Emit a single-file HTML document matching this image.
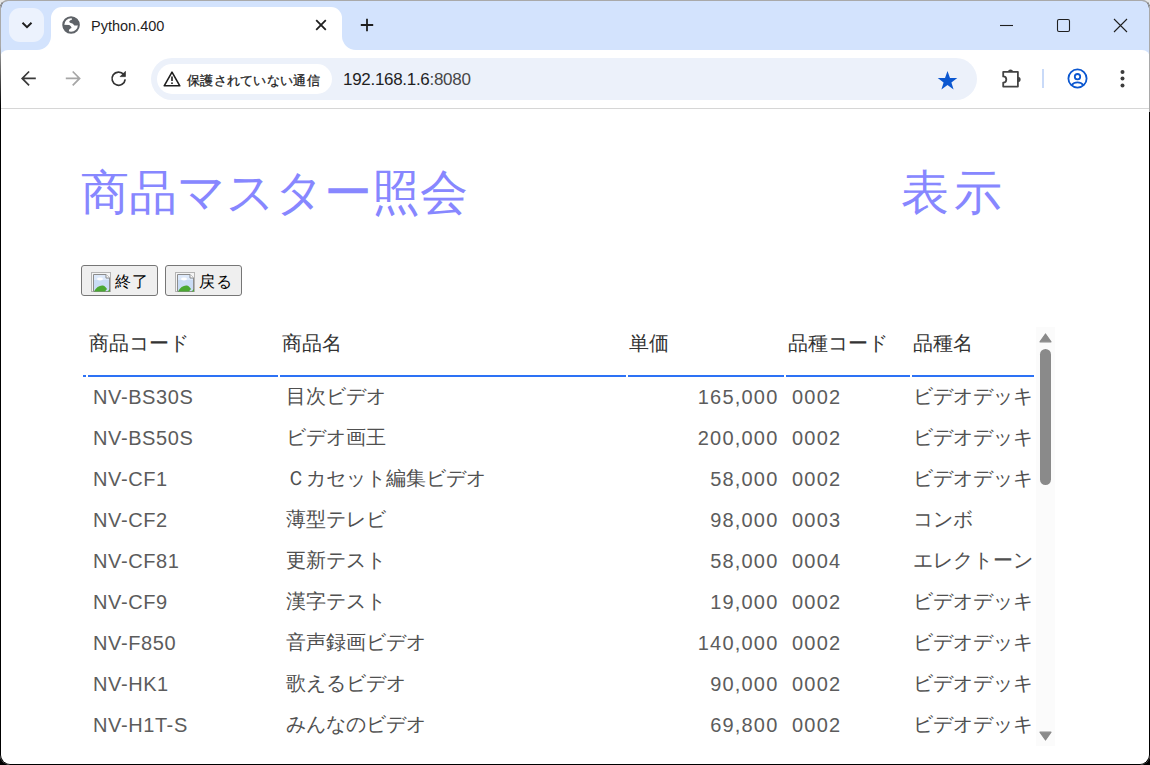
<!DOCTYPE html>
<html lang="ja"><head><meta charset="utf-8">
<style>
*{margin:0;padding:0;box-sizing:border-box}
html,body{width:1150px;height:765px;overflow:hidden;font-family:"Liberation Sans",sans-serif}
body{background:linear-gradient(#e6e6e6 0,#e6e6e6 40px,#3a3550 70px,#000 100px)}
#win{position:absolute;left:0;top:0;width:1150px;height:765px;border-radius:8px 8px 10px 10px;overflow:hidden;background:#fff}
#frame{position:absolute;left:0;top:0;width:1150px;height:765px;border-radius:8px 8px 10px 10px;border:1px solid #000;border-top-color:#a9a9a9;pointer-events:none;z-index:10}
#edgeL{position:absolute;left:0;top:6px;width:1px;height:100px;background:linear-gradient(#a9a9a9,#a9a9a9 40%,#555 70%,#000);z-index:11}
#edgeR{position:absolute;left:1149px;top:6px;width:1px;height:106px;background:#a9a9a9;z-index:11}
#frameT{position:absolute;left:0;top:0;width:1150px;height:100px;border-radius:8px 8px 0 0;border:1px solid #a9a9a9;border-bottom:none;z-index:11}
#strip{position:absolute;left:0;top:0;width:1150px;height:60px;background:#d3e3fd}
#tabbtn{position:absolute;left:9px;top:8px;width:35px;height:34px;border-radius:11px;background:#ecf2fd}
#tab{position:absolute;left:51px;top:7px;width:291px;height:44px;background:#fff;border-radius:11px 11px 0 0}
.tc{position:absolute;top:36px;width:14px;height:14px;background:#fff;overflow:hidden}
.tc::after{content:"";position:absolute;top:-14px;width:28px;height:28px;border-radius:50%;background:#d3e3fd}
#tcl{left:37px}#tcl::after{left:-14px}
#tcr{left:342px}#tcr::after{left:0}
#tabtitle{position:absolute;left:91px;top:18px;font-size:14.5px;color:#1f1f1f;white-space:nowrap}
#toolbar{position:absolute;left:0;top:50px;width:1150px;height:59px;background:#fff;border-radius:8px 8px 0 0;border-bottom:1px solid #d6d6d6}
#omni{position:absolute;left:151px;top:58px;width:826px;height:42px;border-radius:21px;background:#ecf1fa}
#chip{position:absolute;left:157px;top:64px;width:175px;height:30px;border-radius:15px;background:#fff}
#chiptext{position:absolute;left:187px;top:72px;font-size:13px;color:#1f1f1f;white-space:nowrap;-webkit-text-stroke:0.3px #1f1f1f;letter-spacing:0.3px}
#url{position:absolute;left:343px;top:70px;font-size:17px;color:#1f1f1f;white-space:nowrap;letter-spacing:-0.3px}
#url span{color:#474747}
svg{position:absolute;overflow:visible}
.title{position:absolute;top:165px;font-size:47.5px;color:#8787ff;white-space:nowrap;line-height:56px}
.btn{position:absolute;top:265px;height:31px;width:77px;border:1px solid #767676;border-radius:3px;background:#efefef;font-size:16px;color:#000}
.btn .img{position:absolute;left:9px;top:6px}
.btn .lbl{position:absolute;left:33px;top:6px;white-space:nowrap;letter-spacing:0.5px}
.th{position:absolute;top:330px;font-size:20px;color:#333;white-space:nowrap}
.ul{position:absolute;top:375px;height:2px;background:#2d72f5}
.td{position:absolute;font-size:20px;color:#505050;white-space:nowrap;line-height:23px}
.lat{letter-spacing:0.6px;color:#5c5c5c}
.num{letter-spacing:1.2px;color:#5c5c5c}
#sb{position:absolute;left:1036px;top:327px;width:19px;height:419px;background:#fbfbfb}
#thumb{position:absolute;left:1040px;top:349px;width:11px;height:136px;border-radius:5.5px;background:#8a8a8a}
</style></head><body>
<div id="win">
<div id="strip"></div>

<div id="tab"></div>
<div class="tc" id="tcl"></div>
<div class="tc" id="tcr"></div>
<div id="tabbtn"></div>
<svg style="left:21px;top:19px" width="12" height="12" viewBox="0 0 12 12"><path d="M1.5 3.8L6 8.2L10.5 3.8" fill="none" stroke="#1f1f1f" stroke-width="2"/></svg>
<svg style="left:61px;top:15px" width="20" height="20" viewBox="0 0 20 20"><circle cx="10.05" cy="9.95" r="7.8" fill="none" stroke="#5f6368" stroke-width="2"/><g style="clip-path:circle(8px at 10.05px 9.95px)" fill="#5f6368"><path d="M10.9 0L10.9 4.7C9.5 5 8.4 5.5 8.3 6.6C8.2 7.6 9.5 8 10.6 8.3C11.8 8.7 12.4 9.5 13 10.2C13.8 10.9 15.2 10.8 20 9.4L20 0Z"/><path d="M0 9.8L8.2 10.1C9.2 10.5 10 11.5 10.6 13C9.8 13.5 8.8 13.6 8.3 14.4C7.8 15.2 7.9 16 7.9 20L0 20Z"/></g></svg>
<div id="tabtitle">Python.400</div>
<svg style="left:315px;top:19px" width="12" height="12" viewBox="0 0 12 12"><path d="M1.2 1.2L10.8 10.8M10.8 1.2L1.2 10.8" stroke="#1f1f1f" stroke-width="1.8"/></svg>
<svg style="left:360px;top:18px" width="14" height="14" viewBox="0 0 14 14"><path d="M7 0.8V13.2M0.8 7H13.2" stroke="#1f1f1f" stroke-width="1.8"/></svg>
<svg style="left:1000px;top:19px" width="14" height="14" viewBox="0 0 14 14"><path d="M0 6.5H13" stroke="#1f1f1f" stroke-width="1.1"/></svg>
<svg style="left:1056px;top:18px" width="15" height="15" viewBox="0 0 15 15"><rect x="1.5" y="1.5" width="12" height="12" rx="1.5" fill="none" stroke="#1f1f1f" stroke-width="1.1"/></svg>
<svg style="left:1113px;top:18px" width="15" height="15" viewBox="0 0 15 15"><path d="M1 1L14 14M14 1L1 14" stroke="#1f1f1f" stroke-width="1.1"/></svg>

<div id="toolbar"></div>
<svg style="left:20px;top:70px" width="18" height="18" viewBox="0 0 18 18"><path d="M15.8 8.4H2M9.1 1.5L2.2 8.4L9.1 15.3" fill="none" stroke="#3a3a3a" stroke-width="1.7"/></svg>
<svg style="left:64px;top:70px" width="18" height="18" viewBox="0 0 18 18"><path d="M1.8 8.4H15.6M8.7 1.5L15.6 8.4L8.7 15.3" fill="none" stroke="#a6a6a6" stroke-width="1.7"/></svg>
<svg style="left:110px;top:70px" width="18" height="18" viewBox="0 0 18 18"><path d="M13.66 4.36A6.6 6.6 0 1 0 15.2 9.4" fill="none" stroke="#333" stroke-width="1.7"/><path d="M10.2 6.6H15.4V1.4Z" fill="#333" stroke="#333" stroke-width="0.8" stroke-linejoin="round"/></svg>
<div id="omni"></div>
<div id="chip"></div>
<svg style="left:163px;top:71px" width="18" height="16" viewBox="0 0 18 16"><path d="M9 1.2L16.8 14.8H1.2Z" fill="none" stroke="#1f1f1f" stroke-width="1.6" stroke-linejoin="round"/><path d="M9 5.5V10" stroke="#1f1f1f" stroke-width="1.6"/><circle cx="9" cy="12.2" r="0.9" fill="#1f1f1f"/></svg>
<div id="chiptext">保護されていない通信</div>
<div id="url">192.168.1.6<span>:8080</span></div>
<svg style="left:937px;top:70px" width="21" height="20" viewBox="0 0 21 20"><path d="M10.5 1L13 8H20.3L14.4 12.4L16.6 19.4L10.5 15L4.4 19.4L6.6 12.4L0.7 8H8Z" fill="#0b57d0"/></svg>
<svg style="left:1000px;top:67px" width="24" height="23" viewBox="0 0 24 23"><path d="M3.2 4.9H17.9V19.6H3.2V15.6A3.1 3.1 0 0 0 3.2 9.4Z" fill="none" stroke="#444" stroke-width="1.8" stroke-linejoin="round"/><path d="M7.9 5A2.6 2.6 0 0 1 13.1 5Z" fill="#444"/><path d="M17.8 9.7A2.8 2.8 0 0 1 17.8 15.3Z" fill="#444"/></svg>
<div style="position:absolute;left:1042px;top:69px;width:2px;height:19px;background:#c9daf8"></div>
<svg style="left:1066px;top:67px" width="23" height="23" viewBox="0 0 23 23"><circle cx="11.5" cy="11.5" r="9.1" fill="none" stroke="#0b57d0" stroke-width="1.8"/><circle cx="11.5" cy="9.7" r="2.7" fill="none" stroke="#0b57d0" stroke-width="1.8"/><path d="M5.6 18.2C7.2 16.2 9.2 15.4 11.5 15.4C13.8 15.4 15.8 16.2 17.4 18.2" fill="none" stroke="#0b57d0" stroke-width="1.8"/></svg>
<svg style="left:1118px;top:68px" width="9" height="21" viewBox="0 0 9 21"><circle cx="4.5" cy="4" r="2" fill="#3c3c3c"/><circle cx="4.5" cy="10.6" r="2" fill="#3c3c3c"/><circle cx="4.5" cy="17.4" r="2" fill="#3c3c3c"/></svg>

<div class="title" style="left:81px">商品マスター照会</div>
<div class="title" style="left:901px;letter-spacing:5px">表示</div>

<div class="btn" style="left:81px"><svg class="img" width="20" height="20" viewBox="0 0 20 20"><rect x="0.5" y="0.5" width="19" height="19" fill="#f4f4f4" stroke="#b4b4b4"/><path d="M2.5 2.5H15L18.5 6V19.5H2.5Z" fill="#c9dcf5" stroke="#8c8c8c"/><path d="M3 3H14.5V6.5H18V8H3Z" fill="#dde9fa"/><path d="M15 2.5V6H18.5" fill="#fff" stroke="#8c8c8c"/><ellipse cx="9" cy="7" rx="3" ry="1.4" fill="#fff"/><path d="M3 19.5C5 15 9 13 12 13.5C14 14 15 15.5 16 17L14 19.5Z" fill="#4aa832"/><path d="M16.5 19.5L19 17V19.5Z" fill="#4aa832"/></svg><div class="lbl">終了</div></div>
<div class="btn" style="left:165px"><svg class="img" width="20" height="20" viewBox="0 0 20 20"><rect x="0.5" y="0.5" width="19" height="19" fill="#f4f4f4" stroke="#b4b4b4"/><path d="M2.5 2.5H15L18.5 6V19.5H2.5Z" fill="#c9dcf5" stroke="#8c8c8c"/><path d="M3 3H14.5V6.5H18V8H3Z" fill="#dde9fa"/><path d="M15 2.5V6H18.5" fill="#fff" stroke="#8c8c8c"/><ellipse cx="9" cy="7" rx="3" ry="1.4" fill="#fff"/><path d="M3 19.5C5 15 9 13 12 13.5C14 14 15 15.5 16 17L14 19.5Z" fill="#4aa832"/><path d="M16.5 19.5L19 17V19.5Z" fill="#4aa832"/></svg><div class="lbl">戻る</div></div>

<div class="th" style="left:89px">商品コード</div>
<div class="th" style="left:282px">商品名</div>
<div class="th" style="left:629px">単価</div>
<div class="th" style="left:788px">品種コード</div>
<div class="th" style="left:913px">品種名</div>
<div class="ul" style="left:83px;width:3px"></div>
<div class="ul" style="left:88px;width:190px"></div>
<div class="ul" style="left:280px;width:346px"></div>
<div class="ul" style="left:628px;width:156px"></div>
<div class="ul" style="left:786px;width:124px"></div>
<div class="ul" style="left:912px;width:122px"></div>
<div class="td lat" style="left:93px;top:385.50px">NV-BS30S</div>
<div class="td" style="left:286px;top:384.50px">目次ビデオ</div>
<div class="td num" style="right:371.5px;top:385.50px">165,000</div>
<div class="td num" style="left:792px;top:385.50px">0002</div>
<div class="td" style="left:913px;top:384.50px">ビデオデッキ</div>
<div class="td lat" style="left:93px;top:426.57px">NV-BS50S</div>
<div class="td" style="left:286px;top:425.57px">ビデオ画王</div>
<div class="td num" style="right:371.5px;top:426.57px">200,000</div>
<div class="td num" style="left:792px;top:426.57px">0002</div>
<div class="td" style="left:913px;top:425.57px">ビデオデッキ</div>
<div class="td lat" style="left:93px;top:467.64px">NV-CF1</div>
<div class="td" style="left:286px;top:466.64px">Ｃカセット編集ビデオ</div>
<div class="td num" style="right:371.5px;top:467.64px">58,000</div>
<div class="td num" style="left:792px;top:467.64px">0002</div>
<div class="td" style="left:913px;top:466.64px">ビデオデッキ</div>
<div class="td lat" style="left:93px;top:508.71px">NV-CF2</div>
<div class="td" style="left:286px;top:507.71px">薄型テレビ</div>
<div class="td num" style="right:371.5px;top:508.71px">98,000</div>
<div class="td num" style="left:792px;top:508.71px">0003</div>
<div class="td" style="left:913px;top:507.71px">コンボ</div>
<div class="td lat" style="left:93px;top:549.78px">NV-CF81</div>
<div class="td" style="left:286px;top:548.78px">更新テスト</div>
<div class="td num" style="right:371.5px;top:549.78px">58,000</div>
<div class="td num" style="left:792px;top:549.78px">0004</div>
<div class="td" style="left:913px;top:548.78px">エレクトーン</div>
<div class="td lat" style="left:93px;top:590.85px">NV-CF9</div>
<div class="td" style="left:286px;top:589.85px">漢字テスト</div>
<div class="td num" style="right:371.5px;top:590.85px">19,000</div>
<div class="td num" style="left:792px;top:590.85px">0002</div>
<div class="td" style="left:913px;top:589.85px">ビデオデッキ</div>
<div class="td lat" style="left:93px;top:631.92px">NV-F850</div>
<div class="td" style="left:286px;top:630.92px">音声録画ビデオ</div>
<div class="td num" style="right:371.5px;top:631.92px">140,000</div>
<div class="td num" style="left:792px;top:631.92px">0002</div>
<div class="td" style="left:913px;top:630.92px">ビデオデッキ</div>
<div class="td lat" style="left:93px;top:672.99px">NV-HK1</div>
<div class="td" style="left:286px;top:671.99px">歌えるビデオ</div>
<div class="td num" style="right:371.5px;top:672.99px">90,000</div>
<div class="td num" style="left:792px;top:672.99px">0002</div>
<div class="td" style="left:913px;top:671.99px">ビデオデッキ</div>
<div class="td lat" style="left:93px;top:714.06px">NV-H1T-S</div>
<div class="td" style="left:286px;top:713.06px">みんなのビデオ</div>
<div class="td num" style="right:371.5px;top:714.06px">69,800</div>
<div class="td num" style="left:792px;top:714.06px">0002</div>
<div class="td" style="left:913px;top:713.06px">ビデオデッキ</div>
<div id="sb"></div>
<svg style="left:1039px;top:333px" width="13" height="10" viewBox="0 0 13 10"><path d="M6.5 1L12 8.8H1Z" fill="#8a8a8a" stroke="#8a8a8a" stroke-width="1.2" stroke-linejoin="round"/></svg>
<div id="thumb"></div>
<svg style="left:1039px;top:731px" width="13" height="10" viewBox="0 0 13 10"><path d="M6.5 9L12 1.2H1Z" fill="#8a8a8a" stroke="#8a8a8a" stroke-width="1.2" stroke-linejoin="round"/></svg>
</div>
<div id="frame"></div><div id="frameT"></div><div id="edgeL"></div><div id="edgeR"></div>
</body></html>
